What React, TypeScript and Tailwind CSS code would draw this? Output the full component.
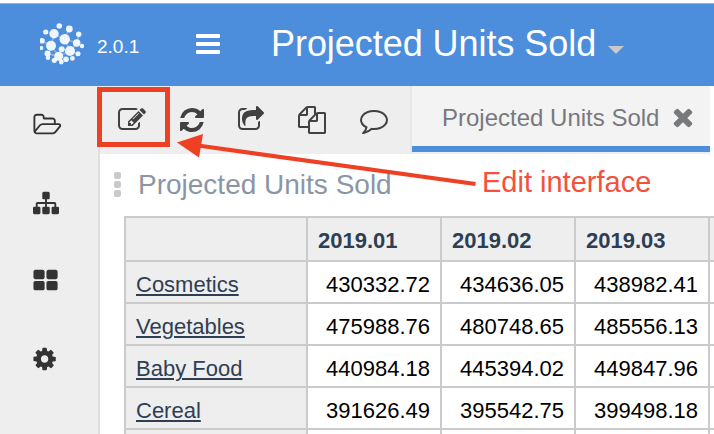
import React from "react";

const PATHS = {
  bars: "M1664 1344v128q0 26-19 45t-45 19h-1408q-26 0-45-19t-19-45v-128q0-26 19-45t45-19h1408q26 0 45 19t19 45zm0-512v128q0 26-19 45t-45 19h-1408q-26 0-45-19t-19-45v-128q0-26 19-45t45-19h1408q26 0 45 19t19 45zm0-512v128q0 26-19 45t-45 19h-1408q-26 0-45-19t-19-45v-128q0-26 19-45t45-19h1408q26 0 45 19t19 45z",
  edit: "M888 1184l116-116-152-152-116 116v56h96v96h56zm440-720q-16-16-33 1l-350 350q-17 17-1 33t33-1l350-350q17-17 1-33zm80 594v190q0 119-84.5 203.5t-203.5 84.5h-832q-119 0-203.5-84.5t-84.5-203.5v-832q0-119 84.5-203.5t203.5-84.5h832q63 0 117 25 15 7 18 23 3 17-9 29l-49 49q-14 14-32 8-23-6-45-6h-832q-66 0-113 47t-47 113v832q0 66 47 113t113 47h832q66 0 113-47t47-113v-126q0-13 9-22l64-64q15-15 35-7t20 29zm-96-738l288 288-672 672h-288v-288zm444 132l-92 92-288-288 92-92q28-28 68-28t68 28l152 152q28 28 28 68t-28 68z",
  refresh: "M1639 1056q0 5-1 7-64 268-268 434.5t-478 166.5q-146 0-282.5-55t-243.5-157l-129 129q-19 19-45 19t-45-19-19-45v-448q0-26 19-45t45-19h448q26 0 45 19t19 45-19 45l-137 137q71 66 161 102t187 36q134 0 250-65t186-179q11-17 53-117 8-23 30-23h192q13 0 22.5 9.5t9.5 22.5zm25-800v448q0 26-19 45t-45 19h-448q-26 0-45-19t-19-45 19-45l138-138q-148-137-349-137-134 0-250 65t-186 179q-11 17-53 117-8 23-30 23h-199q-13 0-22.5-9.5t-9.5-22.5v-7q65-268 270-434.5t480-166.5q146 0 284 55.5t245 156.5l130-129q19-19 45-19t45 19 19 45z",
  share: "M1472 989v259q0 119-84.5 203.5t-203.5 84.5h-832q-119 0-203.5-84.5t-84.5-203.5v-832q0-119 84.5-203.5t203.5-84.5h255q13 0 22.5 9.5t9.5 22.5q0 27-26 32-77 26-133 60-10 4-16 4h-112q-66 0-113 47t-47 113v832q0 66 47 113t113 47h832q66 0 113-47t47-113v-214q0-19 18-29 28-13 54-37 16-16 35-8 21 9 21 29zm237-496l-384 384q-18 19-45 19-12 0-25-5-39-17-39-59v-192h-160q-323 0-438 131-119 137-74 473 3 23-20 34-8 2-12 2-16 0-26-13-10-14-21-31t-39.5-68.5-49.5-99.5-38.5-114-17.5-122q0-49 3.5-91t14-90 28-88 47-81.5 68.5-74 94.5-61.5 124.5-48.5 159.5-30.5 196.5-11h160v-192q0-42 39-59 13-5 25-5 26 0 45 19l384 384q19 19 19 45t-19 45z",
  files: "M1696 384q40 0 68 28t28 68v1216q0 40-28 68t-68 28h-960q-40 0-68-28t-28-68v-288h-544q-40 0-68-28t-28-68v-672q0-40 20-88t48-76l408-408q28-28 76-48t88-20h416q40 0 68 28t28 68v328q68-40 128-40h416zm-544 213l-299 299h299v-299zm-640-384l-299 299h299v-299zm196 647l316-316v-416h-384v416q0 40-28 68t-68 28h-416v640h512v-256q0-40 20-88t48-76zm956 804v-1152h-384v416q0 40-28 68t-68 28h-416v640h896z",
  comment: "M896 384q-204 0-381.5 69.5t-282 187.5-104.5 255q0 112 71.5 213.5t201.5 175.5l87 50-27 96q-24 91-70 172 152-63 275-171l43-38 57 6q69 8 130 8 204 0 381.5-69.5t282-187.5 104.5-255-104.5-255-282-187.5-381.5-69.5zm896 512q0 174-120 321.5t-326 233-450 85.5q-70 0-145-8-198 175-460 242-49 14-114 22h-5q-15 0-27-10.5t-16-27.5v-1q-3-4-.5-12t2-10 4.5-9.5l6-9 7-8.5 8-9q7-8 31-34.5t34.5-38 31-39.5 32.5-51 27-59 26-76q-157-89-247.5-220t-90.5-281q0-174 120-321.5t326-233 450-85.5 450 85.5 326 233 120 321.5z",
  folder: "M1845 931q0-35-53-35h-1088q-40 0-85.5 21.5t-71.5 52.5l-294 363q-18 24-18 40 0 35 53 35h1088q40 0 86-22t71-53l294-363q18-22 18-39zm-1141-163h768v-160q0-40-28-68t-68-28h-576q-40 0-68-28t-28-68v-64q0-40-28-68t-68-28h-320q-40 0-68 28t-28 68v853l256-315q44-53 116-87.5t140-34.5zm1269 163q0 62-46 120l-295 363q-43 53-116 87.5t-140 34.5h-1088q-92 0-158-66t-66-158v-960q0-92 66-158t158-66h320q92 0 158 66t66 158v32h544q92 0 158 66t66 158v160h192q54 0 99 24.5t67 70.5q15 32 15 68z",
  sitemap: "M1792 1248v320q0 40-28 68t-68 28h-320q-40 0-68-28t-28-68v-320q0-40 28-68t68-28h96v-192h-512v192h96q40 0 68 28t28 68v320q0 40-28 68t-68 28h-320q-40 0-68-28t-28-68v-320q0-40 28-68t68-28h96v-192h-512v192h96q40 0 68 28t28 68v320q0 40-28 68t-68 28h-320q-40 0-68-28t-28-68v-320q0-40 28-68t68-28h96v-192q0-52 38-90t90-38h512v-192h-96q-40 0-68-28t-28-68v-320q0-40 28-68t68-28h320q40 0 68 28t28 68v320q0 40-28 68t-68 28h-96v192h512q52 0 90 38t38 90v192h96q40 0 68 28t28 68z",
  grid: "M832 1024v384q0 52-38 90t-90 38h-512q-52 0-90-38t-38-90v-384q0-52 38-90t90-38h512q52 0 90 38t38 90zm0-768v384q0 52-38 90t-90 38h-512q-52 0-90-38t-38-90v-384q0-52 38-90t90-38h512q52 0 90 38t38 90zm896 768v384q0 52-38 90t-90 38h-512q-52 0-90-38t-38-90v-384q0-52 38-90t90-38h512q52 0 90 38t38 90zm0-768v384q0 52-38 90t-90 38h-512q-52 0-90-38t-38-90v-384q0-52 38-90t90-38h512q52 0 90 38t38 90z",
  cog: "M1152 896q0-106-75-181t-181-75-181 75-75 181 75 181 181 75 181-75 75-181zm512-109v222q0 12-8 23t-20 13l-185 28q-19 54-39 91 35 50 107 138 10 12 10 25t-9 23q-27 37-99 108t-94 71q-12 0-26-9l-138-108q-44 23-91 38-16 136-29 186-7 28-36 28h-222q-14 0-24.5-8.5t-11.5-21.5l-28-184q-49-16-90-37l-141 107q-10 9-25 9-14 0-25-11-126-114-165-168-7-10-7-23 0-12 8-23 15-21 51-66.5t54-70.5q-27-50-41-99l-183-27q-13-2-21-12.5t-8-23.5v-222q0-12 8-23t19-13l186-28q14-46 39-92-40-57-107-138-10-12-10-24 0-10 9-23 26-36 98.5-107.5t94.5-71.5q13 0 26 10l138 107q44-23 91-38 16-136 29-186 7-28 36-28h222q14 0 24.5 8.5t11.5 21.5l28 184q49 16 90 37l142-107q9-9 24-9 13 0 25 10 129 119 165 170 7 8 7 22 0 12-8 23-15 21-51 66.5t-54 70.5q26 50 41 98l183 28q13 2 21 12.5t8 23.5z",
  times: "M1490 1322q0 40-28 68l-136 136q-28 28-68 28t-68-28l-294-294-294 294q-28 28-68 28t-68-28l-136-136q-28-28-28-68t28-68l294-294-294-294q-28-28-28-68t28-68l136-136q28-28 68-28t68 28l294 294 294-294q28-28 68-28t68 28l136 136q28 28 28 68t-28 68l-294 294 294 294q28 28 28 68z",
};

type IconProps = { name: keyof typeof PATHS; className: string; minX?: number };

function Icon({ name, className, minX = 0 }: IconProps) {
  return (
    <svg className={`block shrink-0 overflow-visible fill-current ${className}`} viewBox={`${minX} 0 1792 1792`}>
      <path d={PATHS[name]} />
    </svg>
  );
}

const DOTS = [
  [19.3, 11, 2.8], [29.3, 14, 3.4], [5.7, 17, 2.6], [14, 18.7, 4.7], [38.7, 19.3, 2.7],
  [24.7, 24.3, 5.2], [2, 25.7, 2.8], [36.7, 28, 3.8], [11, 30.7, 5], [21.7, 34.3, 3],
  [1.3, 33, 2.1], [42, 31, 2.2], [30, 36, 5], [38, 38.7, 2.5], [7.5, 38.5, 3],
  [8, 42.7, 2.3], [18.7, 41.3, 4.5], [14.3, 45.3, 2.6], [21.3, 47, 2.4], [26, 44.3, 2.8], [32.4, 43.4, 2.4],
];

function Logo() {
  return (
    <svg className="block h-14 w-11 shrink-0" viewBox="0 0 44 56">
      <path
        d="M14 19L11 31L2 26M11 31L8 43M25 24L29 14M25 24L14 19M25 24L37 28L39 19M37 28L30 36L38 39M30 36L19 41L8 39M25 24L30 36M11 31L19 41"
        fill="none"
        stroke="#fff"
        strokeOpacity="0.3"
        strokeWidth="1.8"
      />
      {DOTS.map(([x, y, r]) => (
        <circle key={`${x}-${y}`} cx={x} cy={y} r={r} fill="#fff" fillOpacity="0.9" />
      ))}
    </svg>
  );
}

const MONTHS = ["2019.01", "2019.02", "2019.03", ""];
const ROWS = [
  ["Cosmetics", "430332.72", "434636.05", "438982.41", ""],
  ["Vegetables", "475988.76", "480748.65", "485556.13", ""],
  ["Baby Food", "440984.18", "445394.02", "449847.96", ""],
  ["Cereal", "391626.49", "395542.75", "399498.18", ""],
  ["", "", "", "", ""],
];

const COLS = "grid grid-cols-[182px_134px_134px_134px_134px]";
const CELL = "border-r-2 border-b-2 border-[#cbcbcb]";

function Table() {
  return (
    <div className="ml-6 w-[720px] border-t-2 border-l-2 border-[#cbcbcb] text-[22px] leading-8">
      <div className={`${COLS} h-11 font-bold text-[#2e3f54]`}>
        <div className={`${CELL} bg-[#eee]`} />
        {MONTHS.map((m, i) => (
          <div key={i} className={`${CELL} bg-[#eee] pt-[7px] pl-2.5`}>{m}</div>
        ))}
      </div>
      {ROWS.map((row, r) => (
        <div key={r} className={`${COLS} h-[42px] text-black`}>
          {row.map((value, c) =>
            c === 0 ? (
              <div key={c} className={`${CELL} bg-[#eee] pt-[7px] pl-2.5 text-[#2e3f54] underline decoration-2 underline-offset-2`}>
                {value}
              </div>
            ) : (
              <div key={c} className={`${CELL} bg-white pt-[7px] pr-2.5 text-right`}>{value}</div>
            )
          )}
        </div>
      ))}
    </div>
  );
}

export default function App() {
  return (
    <div className="relative flex h-[434px] w-[714px] flex-col overflow-hidden bg-white font-['Liberation_Sans',Arial,sans-serif]">
      <header className="mt-[3px] flex h-[83px] shrink-0 items-start border-t border-[#a9b0b8] bg-[#4c8edb] text-white">
        <div className="mt-[11px] ml-10"><Logo /></div>
        <span className="mt-[31px] ml-[13px] w-[97px] text-[19px] leading-6">2.0.1</span>
        <Icon name="bars" className="mt-[26px] h-7 w-7" />
        <h1 className="mt-[18px] ml-[49px] text-[36px] leading-[44px] tracking-[-0.05px] whitespace-nowrap">Projected Units Sold</h1>
        <svg className="mt-[42px] ml-3 h-2 w-4 shrink-0" viewBox="0 0 16 8">
          <path d="M0 0H16L8 8Z" fill="#c9c9c9" />
        </svg>
      </header>
      <div className="flex min-h-0 flex-1">
        <nav className="flex w-[100px] shrink-0 flex-col gap-[52px] border-r-2 border-[#e3dddd] bg-[#eee] pt-[26px] pl-[33px] text-[#333]">
          <Icon name="folder" minX={32} className="h-[26px] w-[26px]" />
          <Icon name="sitemap" className="h-[26px] w-[26px]" />
          <Icon name="grid" minX={32} className="h-[26px] w-[26px]" />
          <Icon name="cog" minX={96} className="h-[26px] w-[26px]" />
        </nav>
        <main className="min-w-0 flex-1 overflow-hidden">
          <div className="flex h-[68px] w-[610px] bg-[#eee] text-[#414141]">
            <div className="flex w-[312px] shrink-0 border-r-2 border-[#e8e8e8] pt-5 pl-[18px]">
              <Icon name="edit" className="h-7 w-7" />
              <Icon name="refresh" className="ml-8 h-7 w-7" />
              <Icon name="share" className="ml-[31px] h-7 w-7" />
              <Icon name="files" className="ml-[33px] h-7 w-7" />
              <Icon name="comment" className="ml-[34px] h-7 w-7" />
            </div>
            <div className="flex h-[66px] w-[298px] items-start border-b-[6px] border-[#4c8edb] bg-[#f3f3f3] text-[#77797d]">
              <span className="mt-4 ml-[30px] text-[24px] leading-8 whitespace-nowrap">Projected Units Sold</span>
              <Icon name="times" className="mt-[17px] ml-[10px] h-7 w-7" />
            </div>
          </div>
          <div className="flex h-[62px] items-start">
            <div className="mt-[18px] ml-[14px] flex flex-col gap-0.5">
              <i className="h-[7px] w-[7px] rounded-[2px] bg-[#cacaca]" />
              <i className="h-[7px] w-[7px] rounded-[2px] bg-[#cacaca]" />
              <i className="h-[7px] w-[7px] rounded-[2px] bg-[#cacaca]" />
            </div>
            <h2 className="mt-[14px] ml-[17px] text-[28px] leading-[34px] whitespace-nowrap text-[#8c96a3]">Projected Units Sold</h2>
          </div>
          <Table />
        </main>
      </div>
      <div className="absolute top-[87px] left-[97px] h-[60px] w-[73px] border-5 border-[#ee4024]" />
      <svg className="absolute top-0 left-0 h-[434px] w-[714px]" viewBox="0 0 714 434">
        <path d="M198 145.5L475.5 184" stroke="#ee4024" strokeWidth="4.2" />
        <path d="M177 142.5L203 134L199 157.5Z" fill="#ee4024" />
      </svg>
      <span className="absolute top-[164px] left-[482px] text-[29px] leading-9 whitespace-nowrap text-[#f4503e]">Edit interface</span>
    </div>
  );
}
